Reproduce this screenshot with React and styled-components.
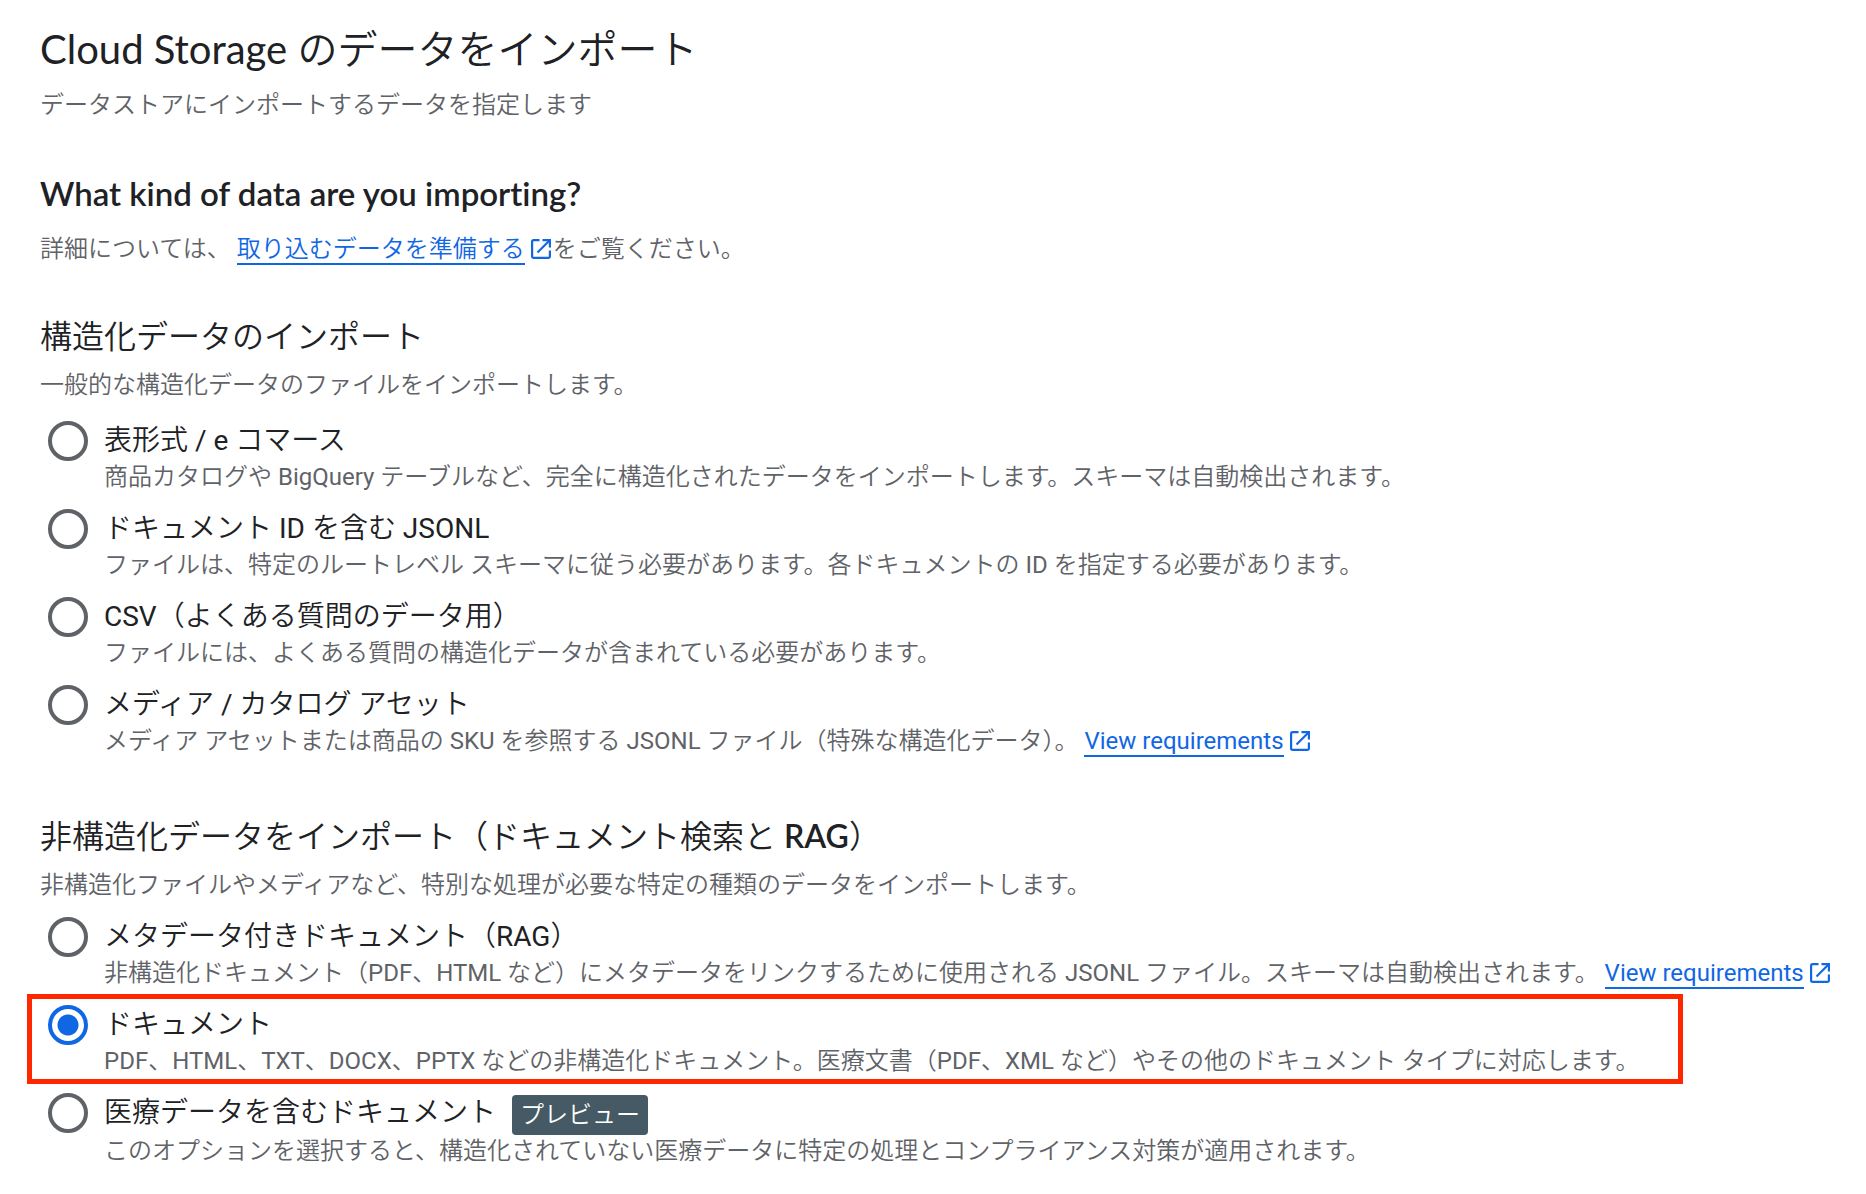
import { useState } from "react"
import styled, { createGlobalStyle } from "styled-components"

const GlobalStyle = createGlobalStyle`
        body {
            margin: 0;
            background-color: #ffffff;
        }
`;

const bodyFont = `"Roboto", "Noto Sans CJK JP DemiLight", "Noto Sans CJK JP", sans-serif`;
const titleFont = `"Lato", "Noto Sans CJK JP DemiLight", "Noto Sans CJK JP", sans-serif`;

const Container = styled.main`
        padding: 25px 24px 24px 40px;
        color: #202124;
        font-family: ${bodyFont};
        font-synthesis: none;
        font-variant-ligatures: none;
`;

const Title = styled.h1`
        margin: 0 0 16px;
        font-family: ${titleFont};
        font-size: 40px;
        font-weight: 400;
        line-height: 48px;
`;

const Subtitle = styled.h2`
        margin: 52px 0 20px;
        font-family: ${titleFont};
        font-size: 33px;
        font-weight: 600;
        line-height: 40px;
`;

const Text = styled.p`
        margin: 0;
        color: #5f6368;
        font-size: 24px;
        line-height: 32px;
`;

const Group = styled.fieldset`
        min-width: 0;
        margin: 0;
        padding: 0 0 8px;
        border: none;
`;

const GroupTitle = styled.legend`
        margin: 0;
        padding: 51px 0 13px;
        font-family: ${titleFont};
        font-size: 32px;
        font-weight: 600;
        line-height: 40px;
`;

const Options = styled.div`
        display: flex;
        flex-direction: column;
        align-items: flex-start;
        gap: 16px;
        padding: ${(props) => (props.$compact ? "16px" : "20px")} 0 0 8px;
`;

const Option = styled.div`
        position: relative;
        display: flex;
        gap: 16px;
`;

const Radio = styled.input`
        appearance: none;
        box-sizing: border-box;
        flex: none;
        width: 40px;
        height: 40px;
        margin: 0;
        border: 4px solid #5f6368;
        border-radius: 50%;
        cursor: pointer;

        &:checked {
            border-color: #1067e4;
            background: radial-gradient(circle, #1067e4 10px, transparent 11px);
        }
`;

const LabelRow = styled.div`
        display: flex;
        align-items: flex-start;
        gap: 16px;
`;

const Label = styled.label`
        font-size: 28px;
        line-height: 40px;
        cursor: pointer;
`;

const Badge = styled.span`
        margin-top: 2px;
        padding: 0 8px;
        border-radius: 4px;
        background-color: #455a64;
        color: #ffffff;
        font-size: 24px;
        line-height: 40px;
`;

const Highlight = styled.div`
        position: absolute;
        top: -11px;
        right: -44px;
        bottom: -7px;
        left: -21px;
        border: 5px solid #ff2600;
        pointer-events: none;
`;

const Link = styled.a`
        color: #1067e4;
        text-decoration: none;
        white-space: nowrap;

        span {
            border-bottom: 2px solid #1067e4;
        }

        svg {
            margin: 0 2px 0 6px;
            vertical-align: -2px;
        }
`;

const OpenIcon = () => (
    <svg width="20" height="20" viewBox="0 0 20 20" fill="none" stroke="currentColor" strokeWidth="2.2" aria-hidden="true">
        <path d="M8.5 1.1H2.6A1.5 1.5 0 0 0 1.1 2.6V17.4A1.5 1.5 0 0 0 2.6 18.9H17.4A1.5 1.5 0 0 0 18.9 17.4V11.5" />
        <path d="M11.5 1.1H18.9V8.5" />
        <path d="M18.5 1.5L6.5 13.5" />
    </svg>
)

const DocLink = ({ children }) => (
    <Link href="#">
        <span>{children}</span>
        <OpenIcon />
    </Link>
)

const structured = [
    {
        id: "tabular",
        label: "表形式 / e コマース",
        text: "商品カタログや BigQuery テーブルなど、完全に構造化されたデータをインポートします。スキーマは自動検出されます。",
    },
    {
        id: "jsonl",
        label: "ドキュメント ID を含む JSONL",
        text: "ファイルは、特定のルートレベル スキーマに従う必要があります。各ドキュメントの ID を指定する必要があります。",
    },
    {
        id: "csv",
        label: "CSV（よくある質問のデータ用）",
        text: "ファイルには、よくある質問の構造化データが含まれている必要があります。",
    },
    {
        id: "media",
        label: "メディア / カタログ アセット",
        text: "メディア アセットまたは商品の SKU を参照する JSONL ファイル（特殊な構造化データ）。",
        link: "View requirements",
    },
];

const unstructured = [
    {
        id: "metadata",
        label: "メタデータ付きドキュメント（RAG）",
        text: "非構造化ドキュメント（PDF、HTML など）にメタデータをリンクするために使用される JSONL ファイル。スキーマは自動検出されます。",
        link: "View requirements",
    },
    {
        id: "documents",
        label: "ドキュメント",
        text: "PDF、HTML、TXT、DOCX、PPTX などの非構造化ドキュメント。医療文書（PDF、XML など）やその他のドキュメント タイプに対応します。",
        highlight: true,
    },
    {
        id: "healthcare",
        label: "医療データを含むドキュメント",
        badge: "プレビュー",
        text: "このオプションを選択すると、構造化されていない医療データに特定の処理とコンプライアンス対策が適用されます。",
    },
];

const OptionList = ({ items, value, onChange, compact }) => (
    <Options $compact={compact}>
        {items.map((item) => (
            <Option key={item.id}>
                <Radio
                    type="radio"
                    name="kind"
                    id={item.id}
                    checked={value === item.id}
                    onChange={() => onChange(item.id)}
                />
                <div>
                    <LabelRow>
                        <Label htmlFor={item.id}>{item.label}</Label>
                        {item.badge && <Badge>{item.badge}</Badge>}
                    </LabelRow>
                    <Text>
                        {item.text}
                        {item.link && <> <DocLink>{item.link}</DocLink></>}
                    </Text>
                </div>
                {item.highlight && <Highlight />}
            </Option>
        ))}
    </Options>
)

const App = () => {
    const [kind, setKind] = useState("documents");

    return (
        <Container lang="ja">
            <GlobalStyle />
            <Title>Cloud Storage のデータをインポート</Title>
            <Text>データストアにインポートするデータを指定します</Text>

            <Subtitle>What kind of data are you importing?</Subtitle>
            <Text>
                詳細については、 <DocLink>取り込むデータを準備する</DocLink>をご覧ください。
            </Text>

            <Group>
                <GroupTitle>構造化データのインポート</GroupTitle>
                <Text>一般的な構造化データのファイルをインポートします。</Text>
                <OptionList items={structured} value={kind} onChange={setKind} />
            </Group>

            <Group>
                <GroupTitle>非構造化データをインポート（ドキュメント検索と RAG）</GroupTitle>
                <Text>非構造化ファイルやメディアなど、特別な処理が必要な特定の種類のデータをインポートします。</Text>
                <OptionList items={unstructured} value={kind} onChange={setKind} compact />
            </Group>
        </Container>
    )
}

export default App
